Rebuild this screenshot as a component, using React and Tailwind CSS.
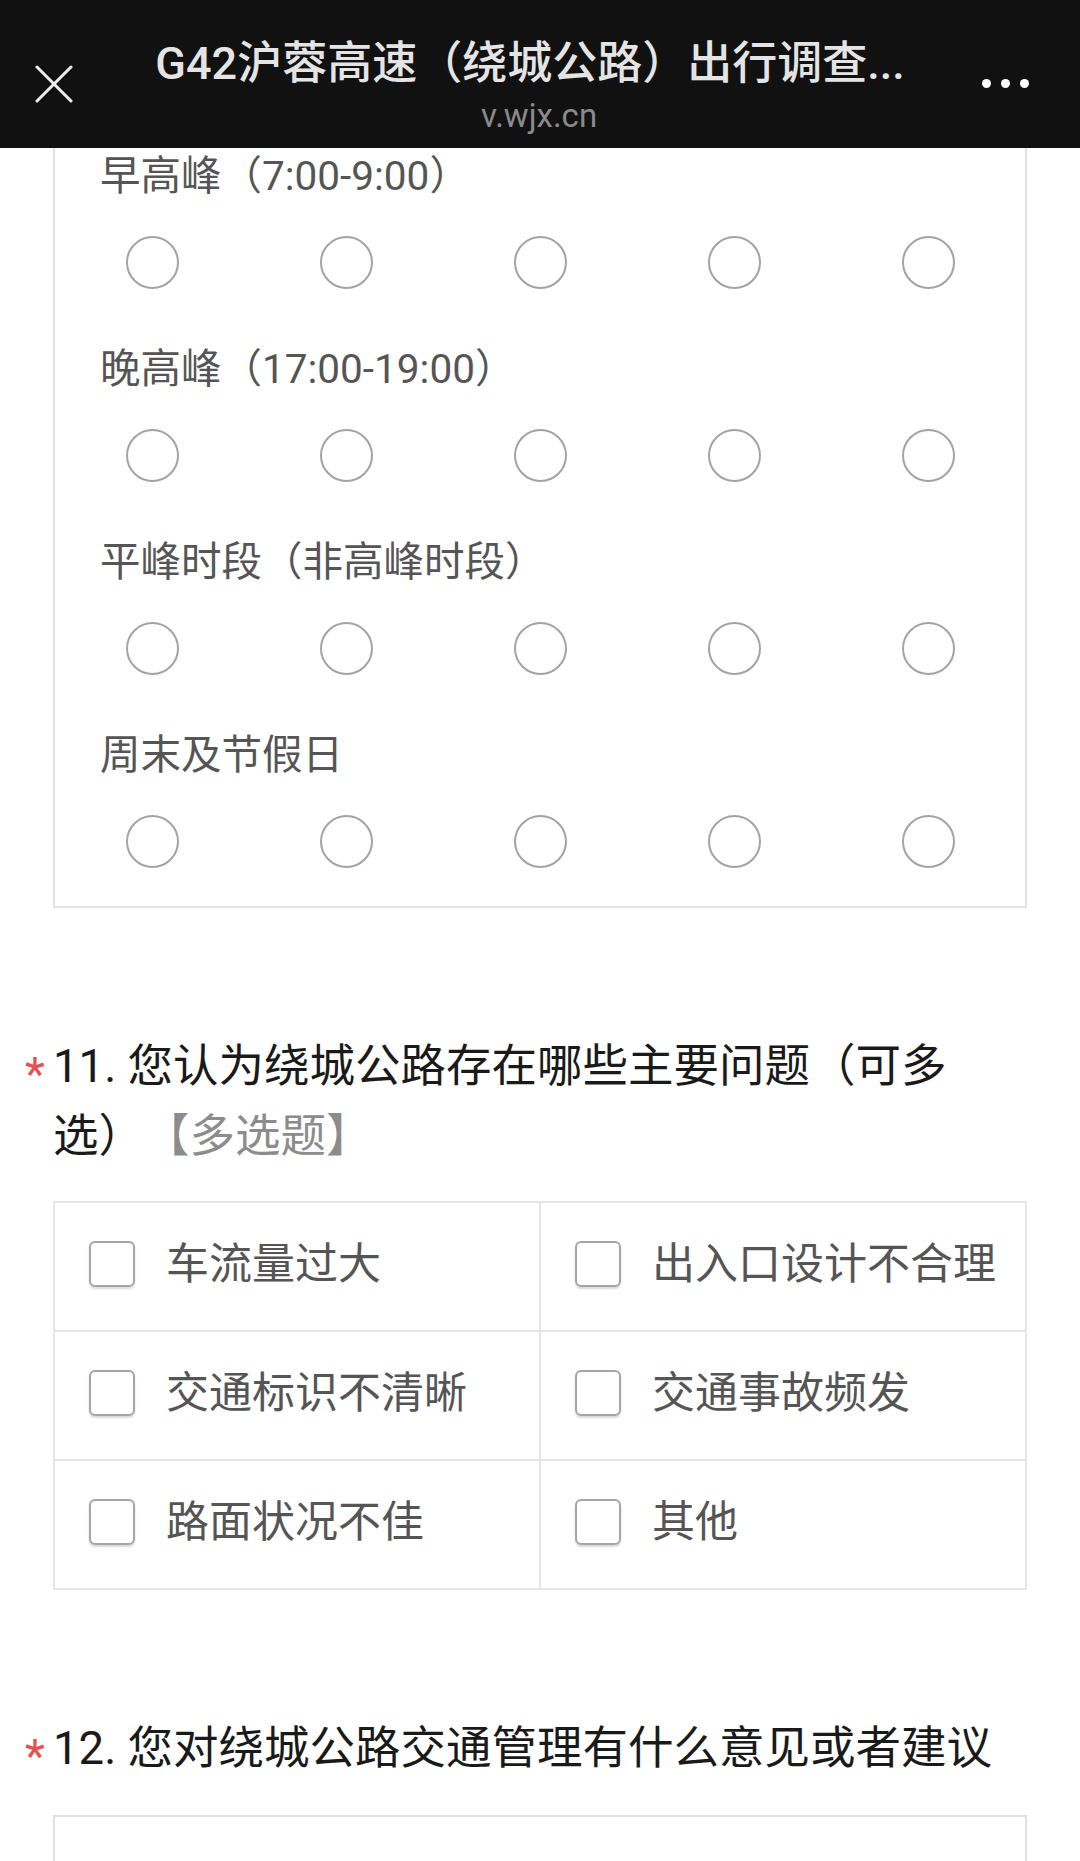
import React from 'react';

const rows = ['早高峰（7:00-9:00）', '晚高峰（17:00-19:00）', '平峰时段（非高峰时段）', '周末及节假日'];

const options = ['车流量过大', '出入口设计不合理', '交通标识不清晰', '交通事故频发', '路面状况不佳', '其他'];

const font = { fontFamily: 'Roboto, "Noto Sans CJK SC", sans-serif' };

const Header = () => (
  <div className="flex h-[148px] bg-[#111111]">
    <div className="w-[110px] pl-[35px] pt-[65px]">
      <svg width="38" height="38" viewBox="0 0 38 38">
        <path d="M2 2 L36 36 M36 2 L2 36" stroke="#eeeeee" strokeWidth="3" strokeLinecap="round" />
      </svg>
    </div>
    <div className="flex-1 flex flex-col items-center pt-[38px]">
      <div className="text-[45px] leading-[52px] font-medium text-[#e4e4e4] whitespace-nowrap">
        G42沪蓉高速（绕城公路）出行调查...
      </div>
      <div className="mt-[7px] pl-[18px] text-[33px] leading-[38px] text-[#8a8a8a]">v.wjx.cn</div>
    </div>
    <div className="w-[130px] flex gap-[10px] pl-[32px] pt-[79px]">
      <span className="w-[9px] h-[9px] rounded-full bg-white" />
      <span className="w-[9px] h-[9px] rounded-full bg-white" />
      <span className="w-[9px] h-[9px] rounded-full bg-white" />
    </div>
  </div>
);

const QuestionTitle = ({ children, className }) => (
  <div className={'flex pl-[25px] pr-[40px] ' + className}>
    <span className="w-[28px] shrink-0 mt-[19px] text-[46px] leading-[46px] text-[#e35252]">*</span>
    <div className="text-[45.5px] leading-[70px] text-[#1a1a1a]">{children}</div>
  </div>
);

export default function App() {
  return (
    <div className="h-[1861px] overflow-hidden bg-white [text-spacing-trim:space-all]" style={font}>
      <Header />

      {/* matrix question, top part scrolled away */}
      <div className="mx-[53px] border-2 border-t-0 border-[#e3e3e3] pt-2 pb-[38px]">
        {rows.map((label, i) => (
          <div key={label} className={i > 0 ? 'mt-[60px]' : ''}>
            <div className="pl-[45px] text-[40.5px] leading-[40px] text-[#555555]">{label}</div>
            <div className="grid grid-cols-5 mt-[40px]">
              {[0, 1, 2, 3, 4].map((n) => (
                <div key={n} className="flex justify-center">
                  <span className="w-[53px] h-[53px] rounded-full border-2 border-[#a3a3a3]" />
                </div>
              ))}
            </div>
          </div>
        ))}
      </div>

      <QuestionTitle className="mt-[124px]">
        11. 您认为绕城公路存在哪些主要问题（可多
        <br />
        选）<span className="text-[#8c8c8c]">【多选题】</span>
      </QuestionTitle>

      <div className="mx-[53px] mt-[29px] grid grid-cols-2 border-l-2 border-t-2 border-[#e5e5e5]">
        {options.map((opt) => (
          <div key={opt} className="h-[129px] flex items-center pl-[34px] pb-[6px] border-r-2 border-b-2 border-[#e5e5e5]">
            <span className="w-[46px] h-[46px] shrink-0 rounded-[6px] border-2 border-[#a5a5a5] shadow-[0_2px_2px_rgba(0,0,0,0.15)]" />
            <span className="ml-[31px] text-[43px] leading-[50px] text-[#555555] whitespace-nowrap">{opt}</span>
          </div>
        ))}
      </div>

      <QuestionTitle className="mt-[124px]">12. 您对绕城公路交通管理有什么意见或者建议</QuestionTitle>

      <div className="mx-[53px] mt-[31px] h-[220px] border-2 border-[#e0e0e0]" />
    </div>
  );
}
